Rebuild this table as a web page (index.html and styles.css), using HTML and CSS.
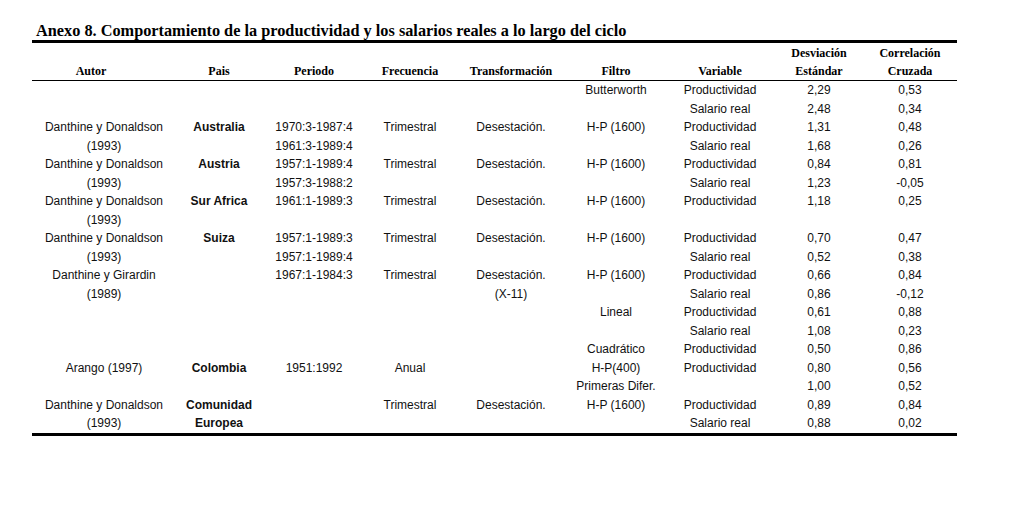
FILE: index.html
```html
<!DOCTYPE html>
<html lang="es">
<head>
<meta charset="utf-8">
<title>Anexo 8</title>
<link rel="stylesheet" href="styles.css">
</head>
<body>
<div class="page">
  <h1 class="title">Anexo 8. Comportamiento de la productividad y los salarios reales a lo largo del ciclo</h1>
  <div class="table">
    <div class="thead">
      <div class="row head">
        <div class="th">Autor</div>
        <div class="th">Pais</div>
        <div class="th">Periodo</div>
        <div class="th">Frecuencia</div>
        <div class="th">Transformación</div>
        <div class="th">Filtro</div>
        <div class="th">Variable</div>
        <div class="th">Desviación<br>Estándar</div>
        <div class="th">Correlación<br>Cruzada</div>
      </div>
    </div>
    <div class="tbody">
      <div class="row"><div></div><div></div><div></div><div></div><div></div><div>Butterworth</div><div>Productividad</div><div>2,29</div><div>0,53</div></div>
      <div class="row"><div></div><div></div><div></div><div></div><div></div><div></div><div>Salario real</div><div>2,48</div><div>0,34</div></div>
      <div class="row"><div>Danthine y Donaldson</div><div class="b">Australia</div><div>1970:3-1987:4</div><div>Trimestral</div><div>Desestación.</div><div>H-P (1600)</div><div>Productividad</div><div>1,31</div><div>0,48</div></div>
      <div class="row"><div>(1993)</div><div></div><div>1961:3-1989:4</div><div></div><div></div><div></div><div>Salario real</div><div>1,68</div><div>0,26</div></div>
      <div class="row"><div>Danthine y Donaldson</div><div class="b">Austria</div><div>1957:1-1989:4</div><div>Trimestral</div><div>Desestación.</div><div>H-P (1600)</div><div>Productividad</div><div>0,84</div><div>0,81</div></div>
      <div class="row"><div>(1993)</div><div></div><div>1957:3-1988:2</div><div></div><div></div><div></div><div>Salario real</div><div>1,23</div><div>-0,05</div></div>
      <div class="row"><div>Danthine y Donaldson</div><div class="b">Sur Africa</div><div>1961:1-1989:3</div><div>Trimestral</div><div>Desestación.</div><div>H-P (1600)</div><div>Productividad</div><div>1,18</div><div>0,25</div></div>
      <div class="row"><div>(1993)</div><div></div><div></div><div></div><div></div><div></div><div></div><div></div><div></div></div>
      <div class="row"><div>Danthine y Donaldson</div><div class="b">Suiza</div><div>1957:1-1989:3</div><div>Trimestral</div><div>Desestación.</div><div>H-P (1600)</div><div>Productividad</div><div>0,70</div><div>0,47</div></div>
      <div class="row"><div>(1993)</div><div></div><div>1957:1-1989:4</div><div></div><div></div><div></div><div>Salario real</div><div>0,52</div><div>0,38</div></div>
      <div class="row"><div>Danthine y Girardin</div><div></div><div>1967:1-1984:3</div><div>Trimestral</div><div>Desestación.</div><div>H-P (1600)</div><div>Productividad</div><div>0,66</div><div>0,84</div></div>
      <div class="row"><div>(1989)</div><div></div><div></div><div></div><div>(X-11)</div><div></div><div>Salario real</div><div>0,86</div><div>-0,12</div></div>
      <div class="row"><div></div><div></div><div></div><div></div><div></div><div>Lineal</div><div>Productividad</div><div>0,61</div><div>0,88</div></div>
      <div class="row"><div></div><div></div><div></div><div></div><div></div><div></div><div>Salario real</div><div>1,08</div><div>0,23</div></div>
      <div class="row"><div></div><div></div><div></div><div></div><div></div><div>Cuadrático</div><div>Productividad</div><div>0,50</div><div>0,86</div></div>
      <div class="row"><div>Arango (1997)</div><div class="b">Colombia</div><div>1951:1992</div><div>Anual</div><div></div><div>H-P(400)</div><div>Productividad</div><div>0,80</div><div>0,56</div></div>
      <div class="row"><div></div><div></div><div></div><div></div><div></div><div>Primeras Difer.</div><div></div><div>1,00</div><div>0,52</div></div>
      <div class="row"><div>Danthine y Donaldson</div><div class="b">Comunidad</div><div></div><div>Trimestral</div><div>Desestación.</div><div>H-P (1600)</div><div>Productividad</div><div>0,89</div><div>0,84</div></div>
      <div class="row"><div>(1993)</div><div class="b">Europea</div><div></div><div></div><div></div><div></div><div>Salario real</div><div>0,88</div><div>0,02</div></div>
    </div>
  </div>
</div>
</body>
</html>
```

FILE: styles.css
```css
html, body {
  margin: 0;
  padding: 0;
  background: #fff;
}

.page {
  padding-top: 22px;
}

.title {
  margin: 0 0 0 36px;
  font-family: "Liberation Serif", "Times New Roman", serif;
  font-weight: bold;
  font-size: 16.3px;
  line-height: 18px;
  color: #000;
  white-space: nowrap;
}

.table {
  margin-left: 32px;
  width: 925px;
  border-top: 3px solid #000;
  border-bottom: 3px solid #000;
}

.thead {
  border-bottom: 1px solid #000;
  padding-top: 2px;
}

.row {
  display: grid;
  grid-template-columns: 162px 94px 96px 96px 106px 104px 104px 94px 88px;
  margin-left: -22px;
  width: 944px;
}

.head {
  align-items: end;
}

.th {
  font-family: "Liberation Serif", "Times New Roman", serif;
  font-weight: bold;
  font-size: 12px;
  line-height: 17.5px;
  text-align: center;
  color: #000;
  white-space: nowrap;
}

.tbody .row {
  height: 18.5px;
}

.tbody .row > div {
  font-family: "Liberation Sans", Arial, sans-serif;
  font-size: 12px;
  line-height: 18.5px;
  text-align: center;
  color: #111;
  white-space: nowrap;
}

.tbody .row > div:first-child {
  padding-left: 26px;
}

.tbody .row > .b {
  font-weight: bold;
}
```
